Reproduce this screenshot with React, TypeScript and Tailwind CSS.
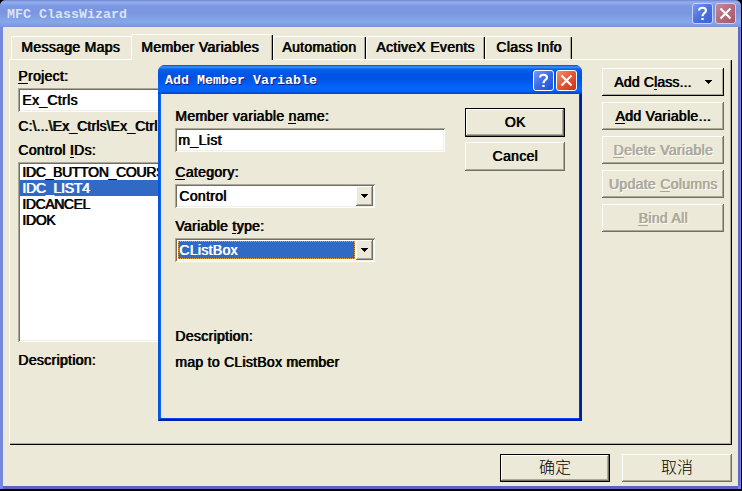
import React from 'react';

const face = 'bg-[#ece9d8]';
const bevel =
  'shadow-[inset_-1px_-1px_#716f64,inset_1px_1px_#ffffff,inset_-2px_-2px_#aca899]';
const sunken =
  'shadow-[inset_1px_1px_#aca899,inset_-1px_-1px_#ffffff,inset_2px_2px_#716f64,inset_-2px_-2px_#f1efe2]';

function T({
  children,
  className = '',
  track = 'tracking-[0.32px]',
  ink = '[text-shadow:0.8px_0_currentColor]',
}: {
  children: React.ReactNode;
  className?: string;
  track?: string;
  ink?: string;
}) {
  return (
    <span className={`block whitespace-pre text-[14px] leading-4 ${track} ${ink} ${className}`}>{children}</span>
  );
}

function U({ children }: { children: React.ReactNode }) {
  return <span className="shadow-[inset_0_-1px_currentColor]">{children}</span>;
}

function CaptionButton({ kind, active }: { kind: 'help' | 'close'; active?: boolean }) {
  const close = kind === 'close';
  const fill = active
    ? close
      ? 'bg-linear-to-br from-[#f09070] via-[#e35530] to-[#c83410] border-white'
      : 'bg-linear-to-br from-[#7898f0] via-[#3c6ae6] to-[#1c50d8] border-white'
    : close
      ? 'bg-linear-to-br from-[#c08a9c] via-[#b56c7c] to-[#a85868] border-[#c4d0f4]'
      : 'bg-linear-to-br from-[#7a9af0] via-[#4a72e0] to-[#3c62d4] border-[#c4d0f4]';
  return (
    <div className={`flex h-[21px] w-[21px] items-center justify-center rounded-[3px] border ${fill}`}>
      {close ? (
        <svg width="13" height="13" viewBox="0 0 13 13" className="block">
          <path d="M1.5 1.5L11.5 11.5M11.5 1.5L1.5 11.5" stroke="#fff" strokeWidth="2.2" />
        </svg>
      ) : (
        <svg width="13" height="15" viewBox="0 0 13 15" className="block">
          <path d="M3 4.5C3 .8 10 .8 10 4.5C10 7 6.5 7 6.5 10.2" fill="none" stroke="#fff" strokeWidth="2.2" />
          <path d="M5.3 12H7.7V14H5.3Z" fill="#fff" />
        </svg>
      )}
    </div>
  );
}

function Arrow() {
  return (
    <svg width="7" height="4" viewBox="0 0 7 4" className="block" shapeRendering="crispEdges">
      <path d="M0 0H7V1H6V2H5V3H4V4H3V3H2V2H1V1H0Z" />
    </svg>
  );
}

function Tab({ label, className, edge = true }: { label: string; className: string; edge?: boolean }) {
  return (
    <div
      className={`flex shrink-0 rounded-tl-[2px] border-l border-t border-white ${
        edge ? 'shadow-[inset_-1px_0_#000,inset_-2px_0_#aca899]' : ''
      } ${className}`}
    >
      <T>{label}</T>
    </div>
  );
}

function SideButton({ children, disabled }: { children: React.ReactNode; disabled?: boolean }) {
  return (
    <div className={`flex h-7 w-[122px] items-center justify-center ${bevel}`}>
      {disabled ? (
        <T className="text-[#aca899]" ink="[text-shadow:0.8px_0_#aca899,1.5px_1px_#fff]">
          {children}
        </T>
      ) : (
        <T>{children}</T>
      )}
    </div>
  );
}

function Combo({ value, selected }: { value: string; selected?: boolean }) {
  return (
    <div className={`flex h-6 w-[200px] bg-white p-[2px] ${sunken}`}>
      <div
        className={`m-px flex min-w-0 flex-1 items-center ${
          selected ? 'border border-dotted border-[#e6a040] bg-[#316ac5] text-white' : 'pl-px'
        }`}
      >
        <T>{value}</T>
      </div>
      <div className={`flex h-5 w-[17px] items-center justify-center ${face} ${bevel}`}>
        <Arrow />
      </div>
    </div>
  );
}

const titleText = "font-['Liberation_Mono'] text-[13.33px] leading-4 font-bold whitespace-pre";

function AddMemberDialog() {
  return (
    <div className="absolute left-[158px] top-[65px] flex h-[356px] w-[424px] flex-col overflow-hidden rounded-t-[7px] bg-[#0831d9]">
      <div className="flex h-[29px] shrink-0 items-center justify-between bg-[linear-gradient(#0048d8_0,#3c94ff_2px,#0a62ee_4px,#0054e3_9px,#0054e3_14px,#0266ff_23px,#0264fa_26px,#0040c8_29px)] pl-[7px] pr-[5px]">
        <span className={`pt-[3px] text-white [text-shadow:1px_1px_#0a1a80] ${titleText}`}>Add Member Variable</span>
        <div className="flex gap-[2px] pt-[2px]">
          <CaptionButton kind="help" active />
          <CaptionButton kind="close" active />
        </div>
      </div>
      <div className="flex min-h-0 flex-1 border-x-[3px] border-b-[3px] border-l-[#0855dd] border-r-[#001ea0] border-b-[#001ea0]">
        <div
          className={`flex flex-1 justify-between pl-[14px] pr-[14px] pt-[14px] shadow-[0_1px_#0045f0,1px_0_#0838d0,-1px_0_#0a64f8] ${face}`}
        >
          <div className="flex flex-col">
            <T>Member variable <U>n</U>ame:</T>
            <div className={`mt-1 flex h-6 w-[270px] items-center bg-white pl-[3px] ${sunken}`}>
              <T track="tracking-[0.4px]">m_List</T>
            </div>
            <T className="mt-3"><U>C</U>ategory:</T>
            <div className="mt-1"><Combo value="Control" /></div>
            <T className="mt-[10px]">Variable <U>t</U>ype:</T>
            <div className="mt-1"><Combo value="CListBox" selected /></div>
            <T className="mt-[66px]">Description:</T>
            <T className="mt-[10px]" track="tracking-[0.28px]">map to CListBox member</T>
          </div>
          <div className="flex w-[100px] flex-col gap-[5px]">
            <div className="h-[29px] border border-black">
              <div className={`flex h-full items-center justify-center pb-[2px] ${bevel}`}><T>OK</T></div>
            </div>
            <div className={`flex h-[29px] items-center justify-center pb-[2px] ${bevel}`}><T>Cancel</T></div>
          </div>
        </div>
      </div>
    </div>
  );
}

export default function App() {
  return (
    <div className="relative h-[491px] w-[742px] overflow-hidden bg-black font-['Liberation_Sans','Noto_Sans_CJK_SC',sans-serif] text-black">
      <div className="flex h-[489px] w-[741px] flex-col overflow-hidden rounded-t-[6px] bg-[#7688dc]">
        <div className="flex h-[27px] shrink-0 items-center justify-between bg-[linear-gradient(#7080d0_0,#94b0ec_2px,#7b98e2_6px,#7b96e0_13px,#84a8ea_22px,#7a94dc_27px)] pl-[7px] pr-[5px]">
          <span className={`pt-0.5 text-[#d8e4f8] ${titleText}`}>MFC ClassWizard</span>
          <div className="flex gap-[2px]">
            <CaptionButton kind="help" />
            <CaptionButton kind="close" />
          </div>
        </div>
        <div className={`mx-[3px] mb-[3px] flex min-h-0 flex-1 flex-col px-[6px] pt-[7px] shadow-[0_3px_#5a62c4,2px_0_#6068c8] ${face}`}>
          <div className="relative flex h-[25px] shrink-0 items-end pl-[2px]">
            <Tab label="Message Maps" className="h-[23px] w-[120px] pl-[9px] pt-[2px]" edge={false} />
            <Tab label="Member Variables" className={`-mb-px h-[26px] w-[142px] pl-[9px] pt-[4px] ${face}`} />
            <Tab label="Automation" className="h-[23px] w-[93px] pl-[8px] pt-[2px]" />
            <Tab label="ActiveX Events" className="h-[23px] w-[119px] pl-[9px] pt-[2px]" />
            <Tab label="Class Info" className="h-[23px] w-[87px] pl-[10px] pt-[2px]" />
          </div>
          <div className="flex h-[386px] w-[723px] shrink-0 justify-between border-l border-t border-white pl-2 pr-2 pt-2 shadow-[inset_-1px_-1px_#000,inset_-2px_-2px_#aca899]">
            <div className="flex w-[160px] flex-col">
              <T><U>P</U>roject:</T>
              <div className={`mt-1 flex h-6 items-center bg-white pl-1 ${sunken}`}><T>Ex_Ctrls</T></div>
              <T className="mt-[6px]" track="tracking-[0.13px]">C:\...\Ex_Ctrls\Ex_Ctrl</T>
              <T className="mt-2">Control <U>I</U>Ds:</T>
              <div className={`mt-1 h-[180px] bg-white p-[2px] ${sunken}`}>
                <T className="pl-[2px]" track="tracking-[-0.3px]">IDC_BUTTON_COURS</T>
                <T className="bg-[#316ac5] pl-[2px] text-white" track="tracking-[-0.2px]">IDC_LIST4</T>
                <T className="pl-[2px]" track="tracking-[-0.4px]">IDCANCEL</T>
                <T className="pl-[2px]" track="tracking-[-0.3px]">IDOK</T>
              </div>
              <T className="mt-[10px]">Description:</T>
            </div>
            <div className="flex flex-col gap-[6px]">
              <div className="flex h-7 w-[122px] items-center justify-between pl-3 pr-3 shadow-[inset_-1px_-1px_#000,inset_1px_1px_#fff,inset_-2px_-2px_#aca899]">
                <T track="tracking-[0.15px]">Add C<U>l</U>ass...</T>
                <Arrow />
              </div>
              <SideButton><U>A</U>dd Variable...</SideButton>
              <SideButton disabled><U>D</U>elete Variable</SideButton>
              <SideButton disabled>Update <U>C</U>olumns</SideButton>
              <SideButton disabled><U>B</U>ind All</SideButton>
            </div>
          </div>
          <div className="flex justify-end gap-3 pt-[9px] font-['Noto_Sans_CJK_SC',sans-serif] text-base font-light">
            <div className="h-7 w-[110px] border border-black">
              <div className={`flex h-full items-center justify-center pb-[5px] ${bevel}`}>确定</div>
            </div>
            <div className={`flex h-7 w-[110px] items-center justify-center pb-[5px] ${bevel}`}>取消</div>
          </div>
        </div>
      </div>
      <AddMemberDialog />
    </div>
  );
}
